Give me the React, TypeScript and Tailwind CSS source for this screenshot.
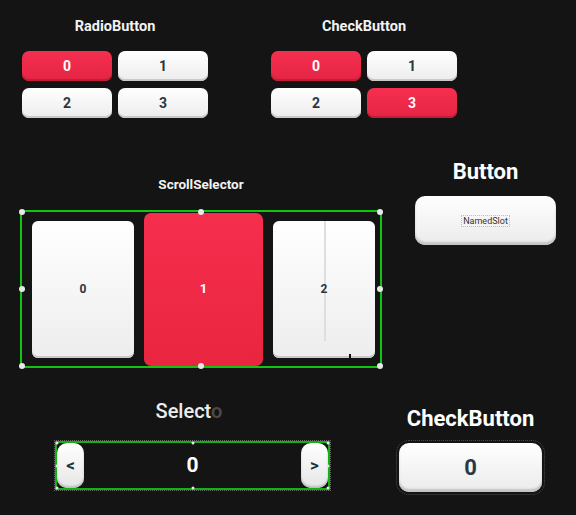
import React from "react";

// pontos brancos de seleção (overlay do editor)
function Handles({ size = 6 }: { size?: number }) {
  const pos = [
    "left-0 top-0",
    "left-1/2 top-0",
    "left-full top-0",
    "left-0 top-1/2",
    "left-full top-1/2",
    "left-0 top-full",
    "left-1/2 top-full",
    "left-full top-full",
  ];
  return (
    <>
      {pos.map((p, i) => (
        <span
          key={i}
          className={`absolute ${p} -translate-x-1/2 -translate-y-1/2 rounded-full bg-[#e8e8e8]`}
          style={{ width: size, height: size }}
        />
      ))}
    </>
  );
}

function GridButton({ label, on }: { label: string; on?: boolean }) {
  return (
    <div
      className={
        on
          ? "h-[30px] rounded-[7px] bg-linear-to-b from-[#f52f4f] to-[#e52443] shadow-[inset_0_-2px_0_#c41c38] flex items-center justify-center text-[14px] font-bold text-white"
          : "h-[30px] rounded-[7px] bg-linear-to-b from-white to-[#ececec] shadow-[inset_0_-2px_0_#c9c9c9] flex items-center justify-center text-[14px] font-bold text-[#2b3640]"
      }
    >
      {label}
    </div>
  );
}

function ButtonGroup({ title, active }: { title: string; active: number[] }) {
  return (
    <div className="w-[186px] flex flex-col items-center">
      <div className="h-[18px] text-[14.5px] leading-[18px] font-bold text-[#f2f2f2]">{title}</div>
      <div className="mt-[15px] w-full grid grid-cols-2 gap-x-[6px] gap-y-[7px]">
        {["0", "1", "2", "3"].map((n, i) => (
          <GridButton key={n} label={n} on={active.includes(i)} />
        ))}
      </div>
    </div>
  );
}

export default function App() {
  return (
    <div className="w-[576px] h-[515px] bg-[#141414] overflow-hidden font-['Roboto',sans-serif]">
      {/* Linha 1 */}
      <div className="flex pt-[18px] pl-[22px] gap-[63px]">
        <ButtonGroup title="RadioButton" active={[0]} />
        <ButtonGroup title="CheckButton" active={[0, 3]} />
      </div>

      {/* Linha 2 */}
      <div className="flex items-start">
        <div className="ml-[20px] w-[362px] flex flex-col items-center pt-[58px]">
          <div className="h-[16px] text-[13.5px] leading-[16px] font-bold text-[#f2f2f2]">ScrollSelector</div>
          <div className="mt-[18px] relative w-full h-[158px] border-2 border-[#13c313] flex items-center pl-[10px] gap-[10px]">
            <div className="w-[102px] h-[137px] rounded-[6px] bg-linear-to-b from-white to-[#ededed] shadow-[inset_0_-2px_0_#c9c9c9] flex items-center justify-center text-[12px] font-bold text-[#2b3640]">
              0
            </div>
            <div className="w-[119px] h-[153px] rounded-[7px] bg-linear-to-b from-[#f52e4d] to-[#e9253f] flex items-center justify-center text-[13px] font-bold text-white">
              1
            </div>
            <div className="relative w-[102px] h-[137px] rounded-[6px] bg-linear-to-b from-white to-[#ededed] shadow-[inset_0_-2px_0_#c9c9c9] flex items-center justify-center text-[12px] font-bold text-[#2b3640]">
              <span className="absolute left-[51px] top-0 w-[2px] h-[120px] bg-[#dedede]" />
              <span className="relative">2</span>
              <span className="absolute left-[76px] top-[133px] w-[2px] h-[6px] bg-[#111]" />
            </div>
            <Handles />
          </div>
        </div>

        <div className="ml-[33px] w-[141px] flex flex-col items-center pt-[42px]">
          <div className="h-[24px] text-[22px] leading-[24px] font-bold text-white">Button</div>
          <div className="mt-[12px] w-full h-[49px] rounded-[10px] bg-linear-to-b from-white to-[#ebebeb] shadow-[inset_0_-3px_2px_#c4c4c4] flex items-center justify-center">
            <span className="px-[1px] border border-dotted border-[#bdbdbd] text-[9px] leading-[10px] text-[#333]">NamedSlot</span>
          </div>
        </div>
      </div>

      {/* Linha 3 */}
      <div className="flex items-start">
        <div className="ml-[55px] w-[275px] flex flex-col items-center pt-[31px]">
          <div className="h-[24px] text-[20px] leading-[24px] font-medium text-[#ececec]">
            Select<span className="opacity-25">o</span><span className="opacity-0">r</span>
          </div>
          <div className="mt-[18px] relative w-full h-[49px] border-2 border-[#14b014] outline outline-dotted outline-[#6a6a6a] outline-offset-0 flex items-center justify-between">
            <div className="w-[27px] h-[45px] rounded-[10px] bg-linear-to-b from-white to-[#e6e6e6] shadow-[inset_0_-2px_2px_#bdbdbd] flex items-center justify-center text-[17px] font-bold text-[#163540]">
              &lt;
            </div>
            <div className="text-[21px] font-bold text-white">0</div>
            <div className="w-[27px] h-[45px] rounded-[10px] bg-linear-to-b from-white to-[#e6e6e6] shadow-[inset_0_-2px_2px_#bdbdbd] flex items-center justify-center text-[17px] font-bold text-[#163540]">
              &gt;
            </div>
            <Handles size={3} />
          </div>
        </div>

        <div className="ml-[69px] w-[143px] flex flex-col items-center pt-[39px]">
          <div className="h-[24px] text-[22px] leading-[24px] font-bold text-white">CheckButton</div>
          <div className="mt-[12px] w-full h-[49px] rounded-[10px] bg-linear-to-b from-white to-[#ebebeb] shadow-[inset_0_-3px_2px_#c4c4c4] outline outline-dotted outline-[#4a4a4a] outline-offset-2 flex items-center justify-center text-[22px] font-bold text-[#2a3a44]">
            0
          </div>
        </div>
      </div>
    </div>
  );
}
